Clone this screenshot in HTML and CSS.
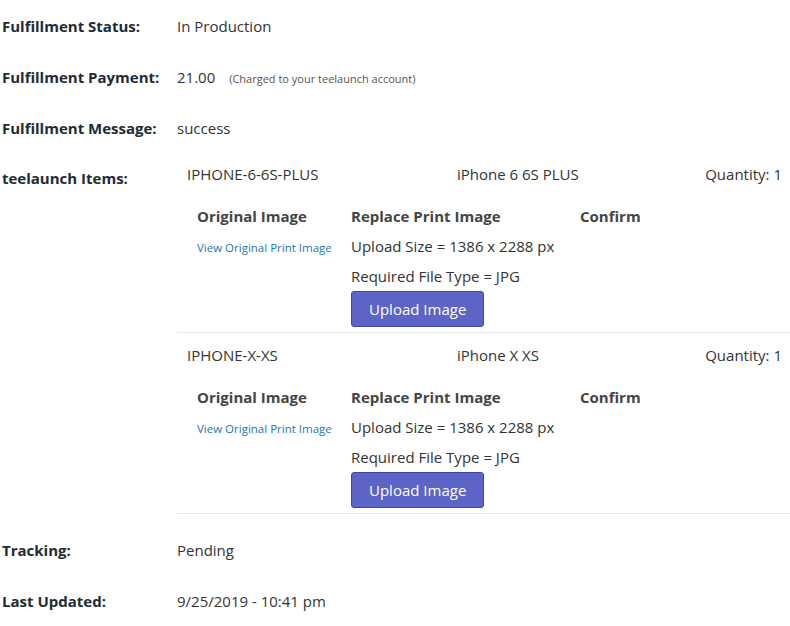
FILE: index.html
```html
<!DOCTYPE html>
<html lang="en">
<head>
    <meta charset="UTF-8">
    <title>Order Fulfillment</title>
    <link rel="stylesheet" href="styles.css">
</head>
<body>
    <div class="details">
        <div class="row">
            <div class="label">Fulfillment Status:</div>
            <div class="value">In Production</div>
        </div>
        <div class="row">
            <div class="label">Fulfillment Payment:</div>
            <div class="value">21.00 <span class="note">(Charged to your teelaunch account)</span></div>
        </div>
        <div class="row">
            <div class="label">Fulfillment Message:</div>
            <div class="value">success</div>
        </div>
        <div class="row items-row">
            <div class="label">teelaunch Items:</div>
            <div class="items">
                <div class="item">
                    <div class="item-head">
                        <span class="sku">IPHONE-6-6S-PLUS</span>
                        <span class="name">iPhone 6 6S PLUS</span>
                        <span class="qty">Quantity: 1</span>
                    </div>
                    <div class="item-body">
                        <div class="col col-orig">
                            <h4>Original Image</h4>
                            <a href="#" class="link">View Original Print Image</a>
                        </div>
                        <div class="col col-replace">
                            <h4>Replace Print Image</h4>
                            <p>Upload Size = 1386 x 2288 px</p>
                            <p>Required File Type = JPG</p>
                            <button class="btn">Upload Image</button>
                        </div>
                        <div class="col col-confirm">
                            <h4>Confirm</h4>
                        </div>
                    </div>
                </div>
                <div class="item">
                    <div class="item-head">
                        <span class="sku">IPHONE-X-XS</span>
                        <span class="name">iPhone X XS</span>
                        <span class="qty">Quantity: 1</span>
                    </div>
                    <div class="item-body">
                        <div class="col col-orig">
                            <h4>Original Image</h4>
                            <a href="#" class="link">View Original Print Image</a>
                        </div>
                        <div class="col col-replace">
                            <h4>Replace Print Image</h4>
                            <p>Upload Size = 1386 x 2288 px</p>
                            <p>Required File Type = JPG</p>
                            <button class="btn">Upload Image</button>
                        </div>
                        <div class="col col-confirm">
                            <h4>Confirm</h4>
                        </div>
                    </div>
                </div>
            </div>
        </div>
        <div class="row">
            <div class="label">Tracking:</div>
            <div class="value">Pending</div>
        </div>
        <div class="row">
            <div class="label">Last Updated:</div>
            <div class="value">9/25/2019 - 10:41 pm</div>
        </div>
    </div>
</body>
</html>
```

FILE: styles.css
```css
body {
    margin: 0;
    padding: 0 0 0 2px;
    background: #fff;
    font-family: 'Open Sans', 'Noto Sans', sans-serif;
    font-size: 15px;
    color: #333;
}
.details {
    padding-top: 15px;
}
.row {
    display: flex;
    align-items: flex-start;
    min-height: 51px;
    line-height: 22px;
}
.label {
    width: 175px;
    flex-shrink: 0;
    font-weight: 700;
    color: #212b36;
}
.value {
    color: #333;
}
.note {
    font-size: 11px;
    color: #555;
    margin-left: 10px;
}
.items-row {
    margin-bottom: 25px;
}
.items-row .label {
    margin-top: -1px;
}
.items {
    flex: 1;
    margin-top: -5px;
}
.item {
    border-bottom: 1px solid #e8e8e8;
    padding-bottom: 5px;
}
.item + .item {
    margin-top: 11px;
}
.item-head {
    display: flex;
    justify-content: space-between;
    padding: 0 8px 0 10px;
    line-height: 22px;
}
.item-head .sku {
    width: 270px;
}
.item-head .name {
    flex: 1;
}
.item-body {
    display: flex;
    padding: 21px 0 0 20px;
}
.col h4 {
    margin: 0 0 9px;
    font-size: 15px;
    font-weight: 700;
    color: #444;
    line-height: 20px;
}
.col-orig {
    width: 154px;
}
.col-replace {
    width: 229px;
}
.col p {
    margin: 0 0 8px;
    line-height: 22px;
}
.link {
    font-size: 11.5px;
    color: #1c76b6;
    text-decoration: none;
}
.btn {
    font-family: inherit;
    font-size: 15px;
    color: #fff;
    background: #5c64c6;
    border: 1px solid #3e47a8;
    border-radius: 3px;
    padding: 0 17px;
    height: 36px;
    margin-top: -4px;
}
```
